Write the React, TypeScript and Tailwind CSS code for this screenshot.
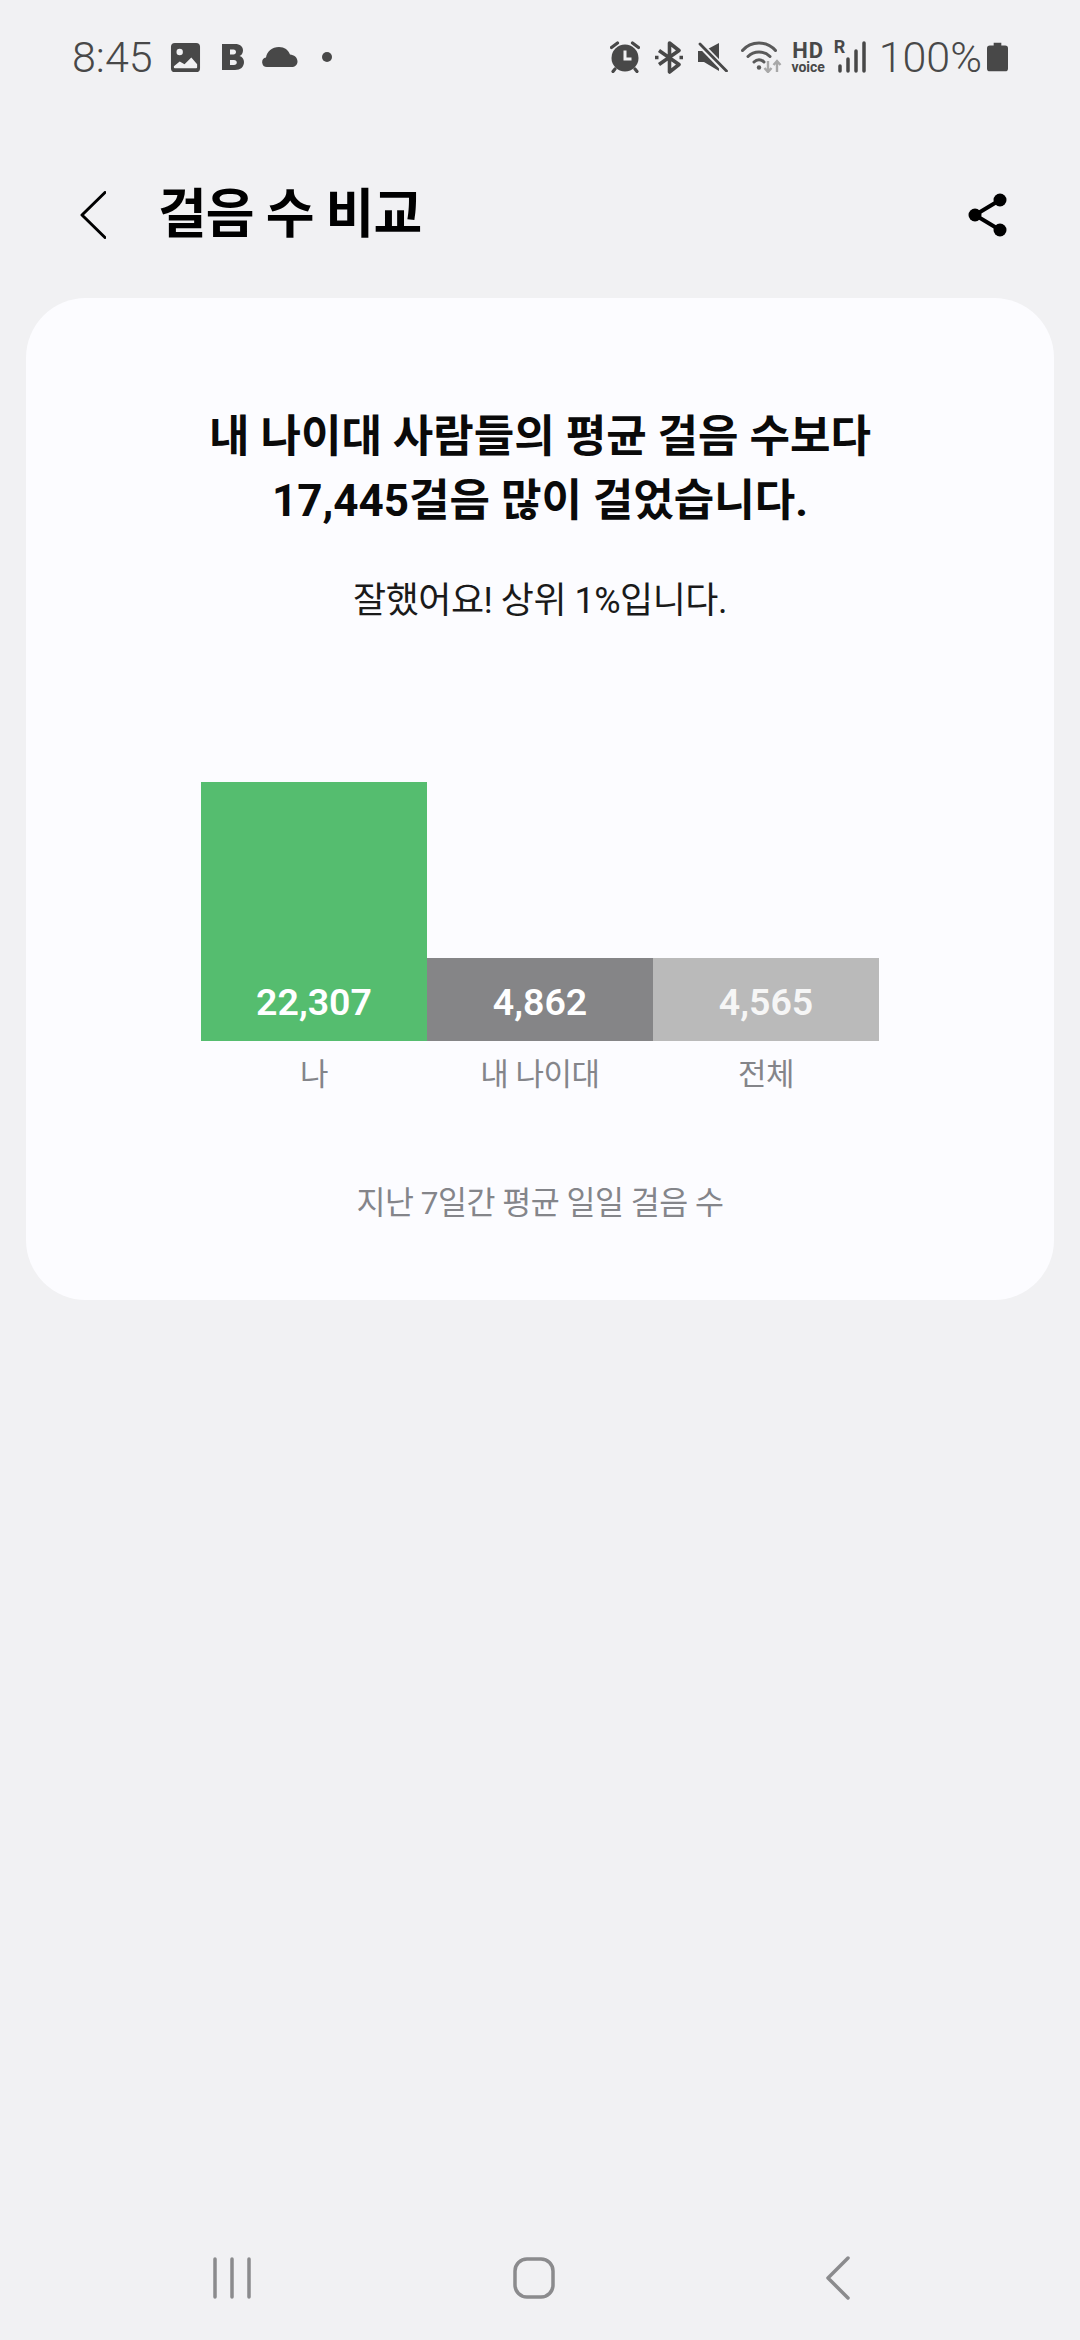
const KR = "font-['Roboto','Noto_Sans_CJK_KR',sans-serif]";

const bars = [
  { label: "나", value: "22,307", height: "h-[259px]", color: "bg-[#55bd6f]", text: "text-white" },
  { label: "내 나이대", value: "4,862", height: "h-[83px]", color: "bg-[#858587]", text: "text-white" },
  { label: "전체", value: "4,565", height: "h-[83px]", color: "bg-[#bababa]", text: "text-[#f6f6f6]" },
];

function StatusBar() {
  return (
    <div className="flex h-[82px] items-end justify-between pr-[72px] pl-[72px] text-[#484848]">
      <div className="flex items-center">
        <span className="w-[85px] font-['Roboto',sans-serif] text-[43px] leading-[50px] font-light">8:45</span>
        <svg viewBox="0 0 32 32" className="ml-[13px] h-[31px] w-[31px]">
          <path fill="#484848" fillRule="evenodd" d="M5 1h22a4 4 0 0 1 4 4v22a4 4 0 0 1-4 4H5a4 4 0 0 1-4-4V5a4 4 0 0 1 4-4zm5 6a3.300 3.300 0 1 0 0 6.600A3.300 3.300 0 0 0 10 7zM5 27h22a1 1 0 0 0 1-1v-3l-6-7-7 7-5-3-6 5v1a1 1 0 0 0 1 1z" />
        </svg>
        <svg viewBox="0 0 24 28" className="ml-[20px] h-[28px] w-[24px]">
          <path fill="#484848" fillRule="evenodd" d="M1 1h13c5 0 8 2.500 8 6.500 0 2.700-1.400 4.600-3.500 5.500 2.800.8 4.500 3 4.500 6 0 5-3.500 8-9 8H1zm8 5.500v5h3.500c1.500 0 2.500-1 2.500-2.500s-1-2.500-2.500-2.500zm0 10.500v5h4c1.700 0 2.800-1 2.800-2.500S14.700 17 13 17z" />
        </svg>
        <svg viewBox="0 0 36 20" className="ml-[17px] h-[20px] w-[36px]">
          <path fill="#484848" d="M5 20a4.800 4.800 0 0 1-1-9.500C5 4.500 10 0 17 0c5.500 0 9.500 3 11 7.500 4 .3 7.500 3 7.500 7 0 3.500-2.500 5.500-6 5.500z" />
        </svg>
        <span className="ml-[24px] h-[10px] w-[10px] rounded-full bg-[#484848]" />
      </div>
      <div className="flex items-center">
        <svg viewBox="0 0 30 32" className="h-[32px] w-[30px]">
          <circle cx="15" cy="17" r="13.500" fill="#484848" />
          <path d="M15 9.500V18h6.500" fill="none" stroke="#f1f1f3" strokeWidth="3" />
          <path d="M1.500 6.500 7.500 2M28.500 6.500 22.500 2M5 28l-2 2.500M25 28l2 2.500" fill="none" stroke="#484848" strokeWidth="3.200" strokeLinecap="round" />
        </svg>
        <svg viewBox="0 0 28 33" className="ml-[15px] h-[33px] w-[28px]">
          <path d="M4 9.500l20 14-9.500 7.500V2L24 9.500 4 23.500" fill="none" stroke="#484848" strokeWidth="3.600" strokeLinejoin="round" />
          <path d="M0 16.500h3.500M24.500 16.500H28" stroke="#484848" strokeWidth="3.600" />
        </svg>
        <svg viewBox="0 0 30 30" className="ml-[15px] h-[30px] w-[30px]">
          <path fill="#484848" d="M0 9h6L21 1v28L6 20H0z" />
          <path d="M1 1l27 28" stroke="#f1f1f3" strokeWidth="6.500" />
          <path d="M2 2l26.500 27" stroke="#484848" strokeWidth="2.800" strokeLinecap="round" />
        </svg>
        <svg viewBox="0 0 42 32" className="ml-[13px] h-[32px] w-[42px]">
          <path d="M1.500 9.500C10-.5 26-.5 34.500 9.500M7 15.500c6-6 16-6 22 0M13 21c3-3 7-3 10 0" fill="none" stroke="#5a5a5a" strokeWidth="3" strokeLinecap="round" />
          <circle cx="18" cy="26.500" r="2.200" fill="#5a5a5a" />
          <path d="M27 20v11M23.500 27l3.500 4 3.500-4M36 31V20M32.500 24l3.500-4 3.500 4" fill="none" stroke="#a8a8a8" strokeWidth="2.400" />
        </svg>
        <div className="ml-[9px] flex w-[33px] flex-col items-center font-['Roboto',sans-serif] font-bold">
          <span className="text-[22px] leading-[20px] tracking-[1px]">HD</span>
          <span className="text-[14px] leading-[12px]">voice</span>
        </div>
        <div className="relative ml-[9px] h-[32px] w-[32px]">
          <span className="absolute top-[-4px] left-0 font-['Roboto',sans-serif] text-[18px] leading-[20px] font-bold">R</span>
          <svg viewBox="0 0 32 32" className="h-full w-full">
            <path d="M6 25v5M14 18v12M22 10v20M30 2v28" stroke="#484848" strokeWidth="3.500" strokeLinecap="round" />
          </svg>
        </div>
        <span className="ml-[13px] font-['Roboto',sans-serif] text-[43px] leading-[50px] font-light">100%</span>
        <svg viewBox="0 0 22 30" className="ml-[5px] h-[30px] w-[21px]">
          <path fill="#484848" d="M7 0h8v3h4a3 3 0 0 1 3 3v21a3 3 0 0 1-3 3H3a3 3 0 0 1-3-3V6a3 3 0 0 1 3-3h4z" />
        </svg>
      </div>
    </div>
  );
}

function Header() {
  return (
    <div className="flex h-[216px] items-center justify-between pt-[50px] pr-[72px] pl-[80px]">
      <div className="flex items-center">
        <svg viewBox="0 0 26 48" className="h-[48px] w-[26px]" fill="none">
          <path d="M25 1.500 2 24l23 22.500" stroke="#000" strokeWidth="3" strokeLinecap="round" strokeLinejoin="round" />
        </svg>
        <h1 className="ml-[52px] text-[53px] leading-[60px] font-bold tracking-[-1px] text-black">걸음 수 비교</h1>
      </div>
      <svg viewBox="0 0 40 44" className="h-[44px] w-[40px]">
        <circle cx="32" cy="7" r="6.500" fill="#000" />
        <circle cx="7" cy="22" r="6.500" fill="#000" />
        <circle cx="32" cy="37" r="6.500" fill="#000" />
        <path d="M32 7 7 22l25 15" fill="none" stroke="#000" strokeWidth="4" />
      </svg>
    </div>
  );
}

function Chart() {
  return (
    <div className="mt-[158px] flex w-[678px] items-end self-center">
      {bars.map((b) => (
        <div key={b.label} className="flex flex-1 flex-col items-center">
          <div className={`flex w-full items-end justify-center pb-[17px] ${b.height} ${b.color}`}>
            <span className={`text-[37.500px] leading-[44px] font-semibold ${b.text}`}>{b.value}</span>
          </div>
          <span className="mt-[16px] text-[31px] leading-[36px] tracking-[-0.5px] text-[#84858a]">{b.label}</span>
        </div>
      ))}
    </div>
  );
}

export default function App() {
  return (
    <div className={`flex h-[2340px] w-[1080px] flex-col overflow-hidden bg-[#f1f1f3] ${KR}`}>
      <StatusBar />
      <Header />
      <main className="mx-[26px] flex h-[1002px] flex-col rounded-[60px] bg-[#fcfcff]">
        <h2 className="mt-[107px] text-center text-[44px] leading-[64px] font-bold text-[#0a0a0a]">
          내 나이대 사람들의 평균 걸음 수보다
          <br />
          17,445걸음 많이 걸었습니다.
        </h2>
        <p className="mt-[45px] text-center text-[36px] leading-[46px] tracking-[-0.5px] text-[#1a1a1a]">잘했어요! 상위 1%입니다.</p>
        <Chart />
        <p className="mt-[91px] text-center text-[31.500px] leading-[40px] tracking-[-0.5px] text-[#84858a]">지난 7일간 평균 일일 걸음 수</p>
      </main>
      <nav className="mt-[956px] flex items-center pl-[213px]">
        <svg viewBox="0 0 38 42" className="h-[42px] w-[38px]">
          <path d="M2 2v38M19 2v38M36 2v38" stroke="#8b8b8d" strokeWidth="3.500" strokeLinecap="round" />
        </svg>
        <svg viewBox="0 0 42 42" className="ml-[262px] h-[42px] w-[42px]" fill="none">
          <rect x="2" y="2" width="38" height="38" rx="12" stroke="#8b8b8d" strokeWidth="3.500" />
        </svg>
        <svg viewBox="0 0 24 44" className="ml-[271px] h-[44px] w-[24px]" fill="none">
          <path d="M22 2 2 22l20 20" stroke="#8b8b8d" strokeWidth="3.500" strokeLinecap="round" strokeLinejoin="round" />
        </svg>
      </nav>
    </div>
  );
}
